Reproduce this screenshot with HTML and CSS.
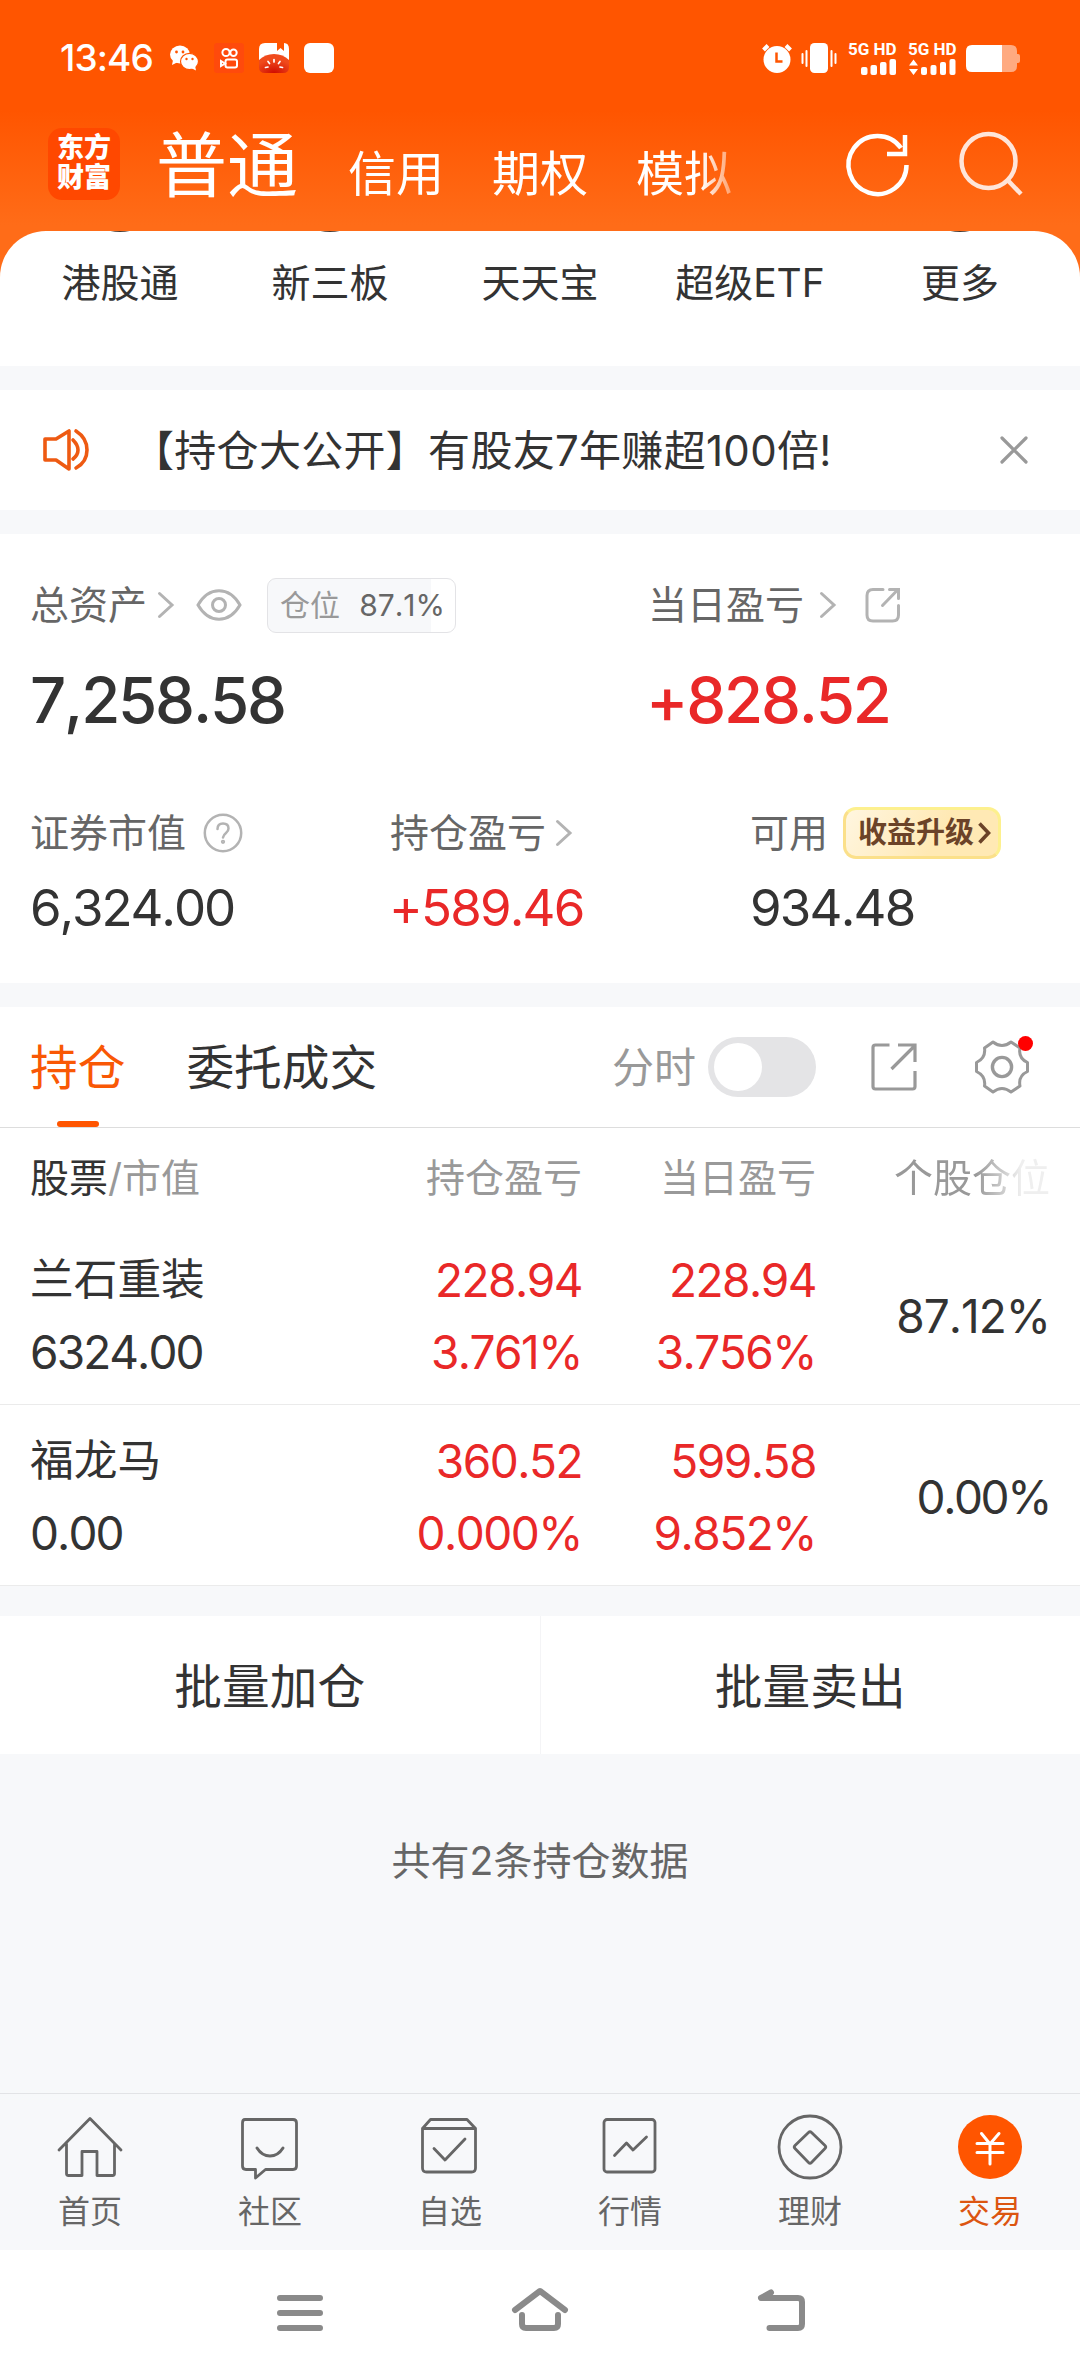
FILE: index.html
```html
<!DOCTYPE html>
<html lang="zh-CN">
<head>
<meta charset="utf-8">
<title>交易</title>
<link rel="stylesheet" href="styles.css">
</head>
<body>
<div class="app">
  <header class="top">
    <div class="status">
      <span class="clock">13:46</span>
      <svg class="s-wechat" width="30" height="30" viewBox="0 0 30 30">
        <ellipse cx="11" cy="11.500" rx="10" ry="9" fill="#fff"/><path d="M4 17l-1 5 6-3z" fill="#fff"/>
        <ellipse cx="20.500" cy="18.500" rx="9" ry="8.200" fill="#fff" stroke="#ff5500" stroke-width="1.200"/><path d="M22 25l5 2.500-1-5z" fill="#fff"/>
        <g fill="#ff5500"><circle cx="7.500" cy="9" r="1.400"/><circle cx="14" cy="9" r="1.400"/><circle cx="17.500" cy="16" r="1.200"/><circle cx="23.500" cy="16" r="1.200"/></g>
      </svg>
      <svg class="s-kwai" width="30" height="30" viewBox="0 0 30 30" fill="none" stroke="#fff" stroke-width="2">
        <rect width="30" height="30" rx="3" fill="#ff4a0c" stroke="none"/>
        <circle cx="12" cy="9.500" r="3.600"/><circle cx="19.500" cy="9.800" r="3.200"/><rect x="11.500" y="16.500" width="11.500" height="8" rx="2"/><path d="M11 20.500l-4-2.500v5z"/>
      </svg>
      <svg class="s-tomato" width="30" height="30" viewBox="0 0 30 30">
        <defs><radialGradient id="tomato" cx=".5" cy="1" r=".7"><stop offset="0" stop-color="#d00c00"/><stop offset="1" stop-color="#f04a1c"/></radialGradient></defs>
        <path d="M6 0h12v8l3.500-3 3.500 3V0q5 0 5 6v11H0V6q0-6 6-6z" fill="#fff"/>
        <path d="M0 17q6-6 15-6t15 6v7q0 6-6 6H6q-6 0-6-6z" fill="url(#tomato)"/>
        <g stroke="#fff" stroke-width="1.700" stroke-linecap="round"><path d="M15 16.500v2.500M9 18.500l1.500 2M21 18.500l-1.500 2M6.500 24.500l2.500-.5M23.500 24.500l-2.500-.5"/></g>
      </svg>
      <span class="s-blank"></span>
      <span class="grow"></span>
      <svg width="30" height="30" viewBox="0 0 30 30">
        <circle cx="15" cy="16.500" r="13.500" fill="#fff"/><path d="M1.500 7L6 2.500M28.500 7L24 2.500" stroke="#fff" stroke-width="4"/><path d="M14.500 9.500v9h6" fill="none" stroke="#ff5500" stroke-width="2.500"/>
      </svg>
      <svg class="s-vib" width="36" height="30" viewBox="0 0 36 30">
        <rect x="9" width="18" height="30" rx="4.500" fill="#fff"/><path d="M1.500 11v9M5.500 8v15M30.500 8v15M34.500 11v9" stroke="#fff" stroke-width="2" stroke-linecap="round"/>
      </svg>
      <span class="sig"><b>5G HD</b><svg width="49" height="16" viewBox="0 0 49 16" fill="#fff"><rect x="13" y="8" width="6.500" height="8" rx="2"/><rect x="22.500" y="6" width="6.500" height="10" rx="2"/><rect x="32" y="3" width="6.500" height="13" rx="2"/><rect x="41.500" y="0" width="6.500" height="16" rx="2"/></svg></span>
      <span class="sig sig2"><b>5G HD</b><svg width="49" height="16" viewBox="0 0 49 16" fill="#fff"><path d="M5.500 0.500l4.500 6H1zM5.500 16l4.500-6H1z"/><rect x="13" y="8" width="6" height="8" rx="2"/><rect x="22.500" y="6" width="6" height="10" rx="2"/><rect x="32" y="3" width="6" height="13" rx="2"/><rect x="41.500" y="0" width="6" height="16" rx="2"/></svg></span>
      <svg width="54" height="27" viewBox="0 0 54 27">
        <path d="M36 0h9q6 0 6 6v3h1q2 0 2 2v5q0 2-2 2h-1v3q0 6-6 6h-9z" fill="#ffaa80"/><path d="M6 0h30v27H6q-6 0-6-6V6q0-6 6-6z" fill="#fff"/>
      </svg>
    </div>
    <div class="head">
      <div class="logo">东方<br>财富</div>
      <nav class="modes">
        <span class="mode on">普通</span><span class="mode">信用</span><span class="mode">期权</span><span class="mode">模拟</span>
      </nav>
      <svg width="64" height="64" viewBox="0 0 64 64" fill="none" stroke="#fff" stroke-width="4.500">
        <path d="M60.500 33A29 29 0 1 1 55 16M59 3v19H41"/>
      </svg>
      <svg class="search" width="64" height="66" viewBox="0 0 64 66" fill="none" stroke="#ffe5d9" stroke-width="4.500">
        <circle cx="29.500" cy="30" r="27"/><path d="M49 49.500L62 63"/>
      </svg>
    </div>
  </header>

  <section class="quick">
    <span><i></i>港股通</span><span><i></i>新三板</span><span>天天宝</span><span>超级ETF</span><span><i></i>更多</span>
  </section>

  <section class="notice">
    <svg width="48" height="44" viewBox="0 0 48 44" fill="none" stroke="#ee5a12" stroke-width="3.600" stroke-linecap="round" stroke-linejoin="round">
      <path d="M3 11h11l13-8v38l-13-9H3z"/><path d="M31 12q5 5 5 10t-5 9M34 3q11 7 11 19t-11 18"/>
    </svg>
    <span class="notice-text">【持仓大公开】有股友7年赚超100倍!</span>
    <svg width="28" height="28" viewBox="0 0 28 28" stroke="#999" stroke-width="3.200" stroke-linecap="round"><path d="M2 2l24 24M26 2L2 26"/></svg>
  </section>

  <section class="assets">
    <div class="line two">
      <div class="cell">
        <div class="label">总资产
          <svg class="chev" width="16" height="26" viewBox="0 0 16 26"><path d="M1.500 1.500L14 13 1.500 24.500"/></svg>
          <svg class="eye" width="46" height="32" viewBox="0 0 46 32" fill="none" stroke="#b3b3b3" stroke-width="3"><path d="M2 16C13-3 33-3 44 16 33 35 13 35 2 16z"/><circle cx="23" cy="16" r="6.500"/></svg>
          <span class="pos"><em>仓位</em><b>87.1%</b></span>
        </div>
        <div class="big total">7,258.58</div>
      </div>
      <div class="cell">
        <div class="label">当日盈亏
          <svg class="chev c2" width="16" height="26" viewBox="0 0 16 26"><path d="M1.500 1.500L14 13 1.500 24.500"/></svg>
          <svg class="share" width="36" height="36" viewBox="0 0 36 36" fill="none" stroke="#b3b3b3" stroke-width="3" stroke-linecap="round"><path d="M18 2.500H8q-6 0-6 6V28q0 6 6 6h19.500q6 0 6-6v-9.500M17.500 18.500l15.500-16M24.500 2.500h9v9"/></svg>
        </div>
        <div class="big red day">+828.52</div>
      </div>
    </div>
    <div class="line three">
      <div class="cell">
        <div class="label">证券市值
          <svg class="help" width="40" height="40" viewBox="0 0 40 40" fill="none" stroke="#b3b3b3" stroke-width="2.500"><circle cx="20" cy="20" r="18.200"/><path d="M14.500 16q0-5.500 5.500-5.500t5.500 5q0 2.500-2.500 4.500t-3 4.500" stroke-linecap="round"/><circle cx="20" cy="28.800" r=".9"/></svg>
        </div>
        <div class="mid first">6,324.00</div>
      </div>
      <div class="cell">
        <div class="label">持仓盈亏
          <svg class="chev c3" width="16" height="26" viewBox="0 0 16 26"><path d="M1.500 1.500L14 13 1.500 24.500"/></svg>
        </div>
        <div class="mid red">+589.46</div>
      </div>
      <div class="cell">
        <div class="label">可用
          <span class="upgrade">收益升级<svg width="13" height="22" viewBox="0 0 13 22" fill="none" stroke="#6b4328" stroke-width="3.600"><path d="M1.500 1.500L10.500 11l-9 9.500"/></svg></span>
        </div>
        <div class="mid">934.48</div>
      </div>
    </div>
  </section>

  <section class="hold">
    <div class="tabs">
      <span class="tab on">持仓</span><span class="tab">委托成交</span>
      <span class="grow"></span>
      <span class="fs">分时</span>
      <span class="toggle"></span>
      <svg class="export" width="46" height="48" viewBox="0 0 46 48" fill="none" stroke="#999" stroke-width="3.200"><path d="M18.500 2H4.500Q2 2 2 4.500v39Q2 46 4.500 46h37q2.500 0 2.500-2.500V28M20.500 26L43 3.500M27 2h17v17"/></svg>
      <span class="gear"><svg width="54" height="54" viewBox="0 0 54 54" fill="none" stroke="#999" stroke-width="3" stroke-linejoin="round">
        <path d="M18 2Q27 9 36 2L45 8Q43 18 52.500 22.500V31.500Q43 36 45 46L36 52Q27 45 18 52L9.500 46Q11 36 1.500 31.500V22.500Q11 18 9.500 8z"/><circle cx="27" cy="27" r="9.600" stroke-width="3.400"/></svg></span>
    </div>
    <div class="row th"><span><b>股票</b>/市值</span><span>持仓盈亏</span><span>当日盈亏</span><span class="fade">个股仓位</span></div>
    <div class="row">
      <div><p class="name">兰石重装</p><p>6324.00</p></div>
      <div class="red"><p>228.94</p><p>3.761%</p></div>
      <div class="red"><p>228.94</p><p>3.756%</p></div>
      <div><p>87.12%</p></div>
    </div>
    <div class="row">
      <div><p class="name">福龙马</p><p>0.00</p></div>
      <div class="red"><p>360.52</p><p>0.000%</p></div>
      <div class="red"><p>599.58</p><p>9.852%</p></div>
      <div><p class="zero">0.00%</p></div>
    </div>
  </section>

  <section class="batch"><span>批量加仓</span><span>批量卖出</span></section>
  <p class="count">共有2条持仓数据</p>

  <nav class="bar">
    <a><svg width="66" height="66" viewBox="0 0 66 66"><path d="M2 36L33 4.500 64 36M9.500 30v29.500q0 2 2 2H25v-24h15v24h15.500q2 0 2-2V30"/></svg>首页</a>
    <a><svg width="66" height="66" viewBox="0 0 66 66"><path d="M8 5.500h48q3.500 0 3.500 3.500v43q0 3.500-3.500 3.500H28.500L18.500 64v-8.500H9q-3.500 0-3.500-3.500V9q0-3.500 2.500-3.500z"/><path d="M20 34q5 8 13 8t13-8" stroke-width="3"/></svg>社区</a>
    <a><svg width="66" height="66" viewBox="0 0 66 66"><path d="M5.500 14.500L13.500 5.500h36.500l8.500 9M5.500 14.500h53V54q0 4-4 4h-45q-4 0-4-4z"/><path d="M17 34.500L28 46l20-21"/></svg>自选</a>
    <a><svg width="66" height="66" viewBox="0 0 66 66"><rect x="7" y="5.500" width="51" height="52.500" rx="3"/><path d="M17.500 41.500L29.500 29l6.500 7L49.500 23"/></svg>行情</a>
    <a><svg width="66" height="66" viewBox="0 0 66 66"><circle cx="33" cy="33" r="31"/><path d="M31.500 18.500q1.500-1.500 3 0L48 31.500q1.500 1.500 0 3L34.500 48.500q-1.500 1.500-3 0L18 34.500q-1.500-1.500 0-3z"/></svg>理财</a>
    <a class="on"><svg width="66" height="66" viewBox="0 0 66 66"><circle cx="33" cy="33" r="32" fill="#ff5500" stroke="none"/><path d="M24.500 19.500L33 30l9-10.500M33 30v20M20 29.500h26M20 38.500h26" stroke="#fff" stroke-width="3"/></svg>交易</a>
  </nav>

  <footer class="sys">
    <svg width="46" height="42" viewBox="0 0 46 42"><path d="M3 9h40M3 24h40M3 39h40"/></svg>
    <svg width="58" height="46" viewBox="0 0 58 46"><path d="M4 21L29 2 54 21M11 26V35q0 4 4 4h28q4 0 4-4v-9"/></svg>
    <svg width="50" height="44" viewBox="0 0 50 44"><path d="M14 3.500L4 9h37q4 0 4 4v22q0 4-4 4H12.500"/></svg>
  </footer>
</div>
</body>
</html>
```
FILE: styles.css
```css
* { box-sizing: border-box; margin: 0; padding: 0; }
body {
  width: 1080px;
  font-family: Inter, "Noto Sans CJK SC", sans-serif;
  line-height: 1.2;
  font-kerning: none;
  color: #333;
  background: #f7f8fa;
}
svg { display: block; flex: none; overflow: visible; }
em, i { font-style: normal; }
.app { display: flex; flex-direction: column; width: 1080px; height: 2376px; }
.grow { flex: 1; }
.red { color: #e92828; }

/* header */
.top { height: 290px; background: linear-gradient(#ff5500 110px, #ff6c18 225px); color: #fff; flex: none; }
.status { display: flex; align-items: center; height: 116px; padding: 0 60px 0 60px; }
.clock { width: 94px; font-size: 37px; font-weight: 500; letter-spacing: -.9px; white-space: nowrap; }
.s-wechat { margin-left: 15px; }
.s-kwai { margin-left: 15px; }
.s-tomato { margin-left: 15px; }
.s-blank { width: 30px; height: 30px; margin-left: 15px; border-radius: 6px; background: #fff; }
.s-vib { margin: 0 11px 0 9px; }
.sig { display: flex; flex-direction: column; width: 49px; height: 33px; justify-content: space-between; }
.sig b { height: 14px; font: bold 17px/14px Roboto, sans-serif; white-space: nowrap; }
.sig2 { margin: 0 9px 0 11px; }
.head { display: flex; align-items: center; height: 96px; padding-left: 48px; }
.logo {
  width: 72px; height: 72px; padding-top: 5px; border-radius: 14px; background: #ff4800;
  font-size: 27px; line-height: 30px; font-weight: 800; text-align: center;
}
.modes {
  display: flex; align-items: baseline; gap: 48px; width: 691px; height: 96px; margin-left: 36px; padding: 1px 4px 0 0;
  line-height: 96px;
  mask-image: linear-gradient(90deg, #000 545px, transparent 595px);
}
.mode { font-size: 48px; white-space: nowrap; }
.mode.on { font-size: 71px; margin-right: 2px; }
.head svg { margin-left: -1px; }
.head .search { margin-left: 49px; }

/* shortcuts */
.quick {
  display: flex; height: 135px; margin-top: -59px; padding: 0 15px; border-radius: 46px 46px 0 0;
  background: #fff; font-size: 39px; line-height: 104px; text-align: center; flex: none; overflow: hidden;
}
.quick span { display: flex; flex-direction: column; align-items: center; width: 210px; position: relative; }
.quick i { position: absolute; top: -8px; width: 30px; height: 9px; border-radius: 50%; background: #4a3a30; }

/* notice */
.notice { display: flex; align-items: center; height: 120px; margin-top: 24px; padding: 0 52px 0 42px; background: #fff; flex: none; }
.notice-text { flex: 1; margin-left: 42px; padding-top: 2px; font-size: 42px; letter-spacing: .3px; white-space: nowrap; }

/* assets */
.assets { height: 449px; margin-top: 24px; padding: 0 30px; background: #fff; flex: none; }
.line { display: flex; }
.cell { flex: none; }
.two { padding-top: 43px; }
.two .cell:first-child { width: 618px; }
.three { padding-top: 67px; }
.three .cell { width: 360px; }
.three .cell:last-child { width: 300px; }
.label { display: flex; align-items: center; height: 56px; font-size: 39px; color: #666; white-space: nowrap; }
.chev { margin-left: 11px; fill: none; stroke: #b3b3b3; stroke-width: 3; stroke-linecap: round; }
.c2 { margin-left: 16px; }
.c3 { margin-left: 10px; }
.eye { margin-left: 22px; }
.pos {
  display: flex; align-items: center; justify-content: space-between; width: 189px; height: 55px; margin-left: 25px; padding: 0 10px 0 12px;
  border: 1px solid #e3e3e6; border-radius: 9px; background: linear-gradient(90deg, #f7f8fa 87.1%, #fff 87.1%); font-size: 30px;
}
.pos em { color: #999; }
.pos b { font-weight: 400; }
.share { margin-left: 29px; }
.help { margin-left: 17px; }
.big { margin-top: 29px; font-size: 63.500px; line-height: 76px; font-weight: 500; letter-spacing: -2.200px; }
.day { margin-left: -2px; letter-spacing: -2.200px; }
.mid { margin-top: 17px; font-size: 51px; line-height: 60px; letter-spacing: -1.800px; }
.mid.red { margin-left: -1px; }
.first { letter-spacing: -2.100px; }
.upgrade {
  display: flex; align-items: center; gap: 4px; width: 158px; height: 52px; margin-left: 15px; padding-left: 12px;
  border: 3px solid; border-color: #fdf08e #fdf08e #fbe08a #fbe08a; border-radius: 13px;
  background: linear-gradient(120deg, #fff6e0, #ffe9b4 60%); color: #6b4328; font-size: 29px; font-weight: 700;
}

/* holdings */
.hold { margin-top: 24px; background: #fff; flex: none; }
.tabs { display: flex; align-items: center; height: 121px; padding: 0 51px 0 30px; border-bottom: 1px solid #ddd; }
.tab { position: relative; padding-top: 3px; font-size: 47.700px; line-height: 117px; margin-right: 61px; }
.tab.on { color: #f95805; }
.tab.on::after { content: ""; position: absolute; left: 27px; bottom: 0; width: 42px; height: 6px; border-radius: 3px; background: #ff5500; }
.fs { padding-top: 2px; font-size: 42px; color: #999; }
.toggle { width: 108px; height: 60px; margin-left: 12px; padding: 6px; border-radius: 30px; background: #e4e4e6; }
.toggle::before { content: ""; display: block; width: 48px; height: 48px; border-radius: 50%; background: #fff; }
.export { margin-left: 55px; }
.gear { position: relative; margin-left: 58px; }
.gear::after { content: ""; position: absolute; right: -4px; top: -4px; width: 15px; height: 15px; border-radius: 50%; background: #f00; }
.row {
  display: grid; grid-template-columns: 251px 301px 234px 234px; align-items: center;
  height: 181px; padding: 4px 30px 0; border-bottom: 1px solid #ebebeb; font-size: 46px; letter-spacing: -1.500px; text-align: right;
}
.row > :first-child { text-align: left; letter-spacing: -1.900px; }
.row p { line-height: 72px; }
.row .name { font-size: 43.700px; letter-spacing: 0; }
.row > :last-child { letter-spacing: -1px; }
.row .zero { letter-spacing: -2.400px; }
.row.th { height: 96px; padding-top: 4px; border: 0; font-size: 39px; color: #999; letter-spacing: 0; }
.row.th > :first-child { letter-spacing: 0; }
.th b { font-weight: 400; color: #333; }
.row .fade { letter-spacing: 0; mask-image: linear-gradient(90deg, #000 160px, rgba(0,0,0,.16) 205px); }

/* batch actions */
.batch { display: flex; height: 138px; margin-top: 30px; background: #fff; flex: none; }
.batch span { flex: 1; font-size: 47.700px; line-height: 142px; text-align: center; }
.batch span + span { border-left: 1px solid #f4f4f6; }
.count { margin-top: 77px; font-size: 39px; line-height: 60px; text-align: center; color: #666; }

/* tab bar */
.bar { display: flex; height: 157px; margin-top: auto; border-top: 1px solid #e2e3e6; flex: none; }
.bar a { display: flex; flex-direction: column; align-items: center; width: 180px; padding-top: 20px; font-size: 32px; line-height: 40px; color: #666; }
.bar svg { margin-bottom: 12px; fill: none; stroke: #666; stroke-width: 2.800; stroke-linecap: round; stroke-linejoin: round; }
.bar .on { color: #dc5510; }
.sys { display: flex; justify-content: center; height: 126px; padding: 39px 0 0 4px; background: #fff; flex: none; }
.sys svg { margin: 0 94px; fill: none; stroke: #8a8a8a; stroke-width: 6; stroke-linecap: round; stroke-linejoin: round; }
```
